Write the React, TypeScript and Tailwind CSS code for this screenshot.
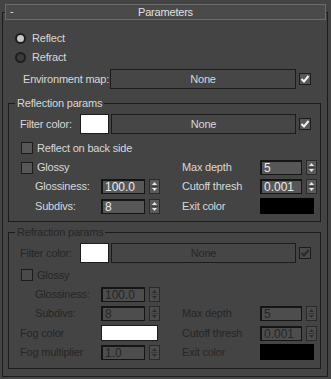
import React from "react";

const FONT = { fontFamily: '"Liberation Sans", Arial, sans-serif' };

function Check({ checked = false, dim = false }: { checked?: boolean; dim?: boolean }) {
  return (
    <div
      className={`w-[12px] h-[12px] shrink-0 border border-[#1c1c1c] flex items-center justify-center ${
        dim ? "bg-[#4a4a4a]" : "bg-[#575757]"
      }`}
    >
      {checked && (
        <svg width="10" height="10" viewBox="0 0 10 10">
          <path d="M1.5 5 L4 7.5 L8.5 2" stroke={dim ? "#2a2a2a" : "#f2f2f2"} strokeWidth="2" fill="none" />
        </svg>
      )}
    </div>
  );
}

function Radio({ on = false }: { on?: boolean }) {
  return (
    <div className="w-[11px] h-[11px] rounded-full bg-[#1e1e1e] flex items-center justify-center shrink-0">
      <div className={`w-[7px] h-[7px] rounded-full ${on ? "bg-[#c9c9c9]" : "bg-[#3c3c3c]"}`} />
    </div>
  );
}

function Arrows({ dim = false }: { dim?: boolean }) {
  const c = dim ? "#2e2e2e" : "#e6e6e6";
  return (
    <div
      className={`w-[11px] h-[15px] shrink-0 border border-[#2a2a2a] flex flex-col ${
        dim ? "bg-[#4c4c4c]" : "bg-[#5a5a5a]"
      }`}
    >
      <svg width="9" height="13" viewBox="0 0 9 13">
        <path d="M2 5 L4.5 2 L7 5 Z" fill={c} />
        <line x1="1" y1="6.5" x2="8" y2="6.5" stroke="#3a3a3a" strokeWidth="1" />
        <path d="M2 8 L4.5 11 L7 8 Z" fill={c} />
      </svg>
    </div>
  );
}

function Spinner({ value, w, dim = false }: { value: string; w: string; dim?: boolean }) {
  return (
    <div className="flex items-center gap-[4px]">
      <div
        className={`${w} h-[15px] border border-[#151515] border-t-2 border-l-2 flex items-center pl-[2px] text-[12px] leading-none tracking-normal ${
          dim ? "bg-[#4d4d4d] text-[#262626]" : "bg-[#575757] text-[#ececec]"
        }`}
      >
        {value}
      </div>
      <Arrows dim={dim} />
    </div>
  );
}

function NoneButton({ w, h, dim = false }: { w: string; h: string; dim?: boolean }) {
  return (
    <div
      className={`${w} ${h} shrink-0 border border-[#1c1c1c] bg-[#464646] flex items-center justify-center ${
        dim ? "text-[#262626]" : "text-[#d8d8d8]"
      }`}
    >
      None
    </div>
  );
}

function Label({ children, w = "", dim = false }: { children: React.ReactNode; w?: string; dim?: boolean }) {
  return (
    <span className={`${w} shrink-0 whitespace-nowrap ${dim ? "text-[#262626]" : "text-[#d8d8d8]"}`}>{children}</span>
  );
}

function Group({ title, h, dim = false, children }: { title: string; h: string; dim?: boolean; children: React.ReactNode }) {
  return (
    <div className={`relative ml-[5px] w-[313px] ${h} border border-[#1c1c1c]`}>
      <span
        className={`absolute -top-[8px] left-[6px] px-[2px] bg-[#444444] leading-[14px] whitespace-nowrap ${
          dim ? "text-[#262626]" : "text-[#d8d8d8]"
        }`}
      >
        {title}
      </span>
      {children}
    </div>
  );
}

export default function App() {
  return (
    <div
      className="relative w-[331px] h-[379px] bg-[#444444] overflow-hidden text-[11px] tracking-[-0.2px] text-[#d8d8d8]"
      style={FONT}
    >
      {/* rollout frame */}
      <div className="mt-[12px] ml-[2px] w-[326px] h-[365px] border border-[#1c1c1c] pt-[17px]">
        <div className="flex items-center h-[16px] pl-[12px] gap-[6px]">
          <Radio on />
          <Label>Reflect</Label>
        </div>
        <div className="flex items-center h-[16px] mt-[3px] pl-[12px] gap-[6px]">
          <Radio />
          <Label>Refract</Label>
        </div>
        <div className="flex items-center h-[20px] mt-[4px] pl-[20px]">
          <Label w="w-[87px]">Environment map:</Label>
          <NoneButton w="w-[186px]" h="h-[20px]" />
          <div className="ml-[3px]">
            <Check checked />
          </div>
        </div>

        <div className="mt-[14px]">
          <Group title="Reflection params" h="h-[119px]">
            <div className="flex items-center h-[20px] mt-[10px] pl-[11px]">
              <Label w="w-[60px]">Filter color:</Label>
              <div className="w-[29px] h-[20px] shrink-0 bg-white border border-[#1c1c1c]" />
              <div className="ml-[2px]">
                <NoneButton w="w-[185px]" h="h-[20px]" />
              </div>
              <div className="ml-[3px]">
                <Check checked />
              </div>
            </div>
            <div className="flex items-center h-[16px] mt-[6px] pl-[12px] gap-[4px]">
              <Check />
              <Label>Reflect on back side</Label>
            </div>
            <div className="flex items-center h-[15px] mt-[4px]">
              <div className="w-[173px] flex items-center pl-[12px] gap-[4px]">
                <Check />
                <Label>Glossy</Label>
              </div>
              <Label w="w-[78px]">Max depth</Label>
              <Spinner value="5" w="w-[42px]" />
            </div>
            <div className="flex items-center h-[15px] mt-[4px]">
              <div className="w-[173px] flex items-center pl-[26px]">
                <Label w="w-[66px]">Glossiness:</Label>
                <Spinner value="100.0" w="w-[44px]" />
              </div>
              <Label w="w-[78px]">Cutoff thresh</Label>
              <Spinner value="0.001" w="w-[42px]" />
            </div>
            <div className="flex items-center h-[16px] mt-[4px]">
              <div className="w-[173px] flex items-center pl-[26px]">
                <Label w="w-[66px]">Subdivs:</Label>
                <Spinner value="8" w="w-[44px]" />
              </div>
              <Label w="w-[78px]">Exit color</Label>
              <div className="w-[54px] h-[16px] bg-black" />
            </div>
          </Group>
        </div>

        <div className="mt-[10px]">
          <Group title="Refraction params" h="h-[137px]" dim>
            <div className="flex items-center h-[20px] mt-[10px] pl-[11px]">
              <Label w="w-[60px]" dim>Filter color:</Label>
              <div className="w-[29px] h-[20px] shrink-0 bg-white border border-[#1c1c1c]" />
              <div className="ml-[2px]">
                <NoneButton w="w-[185px]" h="h-[20px]" dim />
              </div>
              <div className="ml-[3px]">
                <Check checked dim />
              </div>
            </div>
            <div className="flex items-center h-[16px] mt-[4px] pl-[12px] gap-[4px]">
              <Check dim />
              <Label dim>Glossy</Label>
            </div>
            <div className="flex items-center h-[15px] mt-[4px]">
              <div className="w-[173px] flex items-center pl-[26px]">
                <Label w="w-[66px]" dim>Glossiness:</Label>
                <Spinner value="100.0" w="w-[44px]" dim />
              </div>
            </div>
            <div className="flex items-center h-[15px] mt-[4px]">
              <div className="w-[173px] flex items-center pl-[26px]">
                <Label w="w-[66px]" dim>Subdivs:</Label>
                <Spinner value="8" w="w-[44px]" dim />
              </div>
              <Label w="w-[78px]" dim>Max depth</Label>
              <Spinner value="5" w="w-[42px]" dim />
            </div>
            <div className="flex items-center h-[16px] mt-[4px]">
              <div className="w-[173px] flex items-center pl-[11px]">
                <Label w="w-[81px]" dim>Fog color</Label>
                <div className="w-[57px] h-[16px] bg-white border border-[#1c1c1c]" />
              </div>
              <Label w="w-[78px]" dim>Cutoff thresh</Label>
              <Spinner value="0.001" w="w-[42px]" dim />
            </div>
            <div className="flex items-center h-[16px] mt-[3px]">
              <div className="w-[173px] flex items-center pl-[11px]">
                <Label w="w-[81px]" dim>Fog multiplier</Label>
                <Spinner value="1.0" w="w-[44px]" dim />
              </div>
              <Label w="w-[78px]" dim>Exit color</Label>
              <div className="w-[54px] h-[16px] bg-black" />
            </div>
          </Group>
        </div>
      </div>

      {/* rollout header */}
      <div className="absolute left-[5px] top-[4px] w-[321px] h-[16px] border border-[#6b6b6b] bg-[#4a4a4a] flex items-center justify-center text-[#e0e0e0]">
        <span className="absolute left-[4px] top-[0px] leading-[13px]">-</span>
        <span>Parameters</span>
      </div>
    </div>
  );
}
